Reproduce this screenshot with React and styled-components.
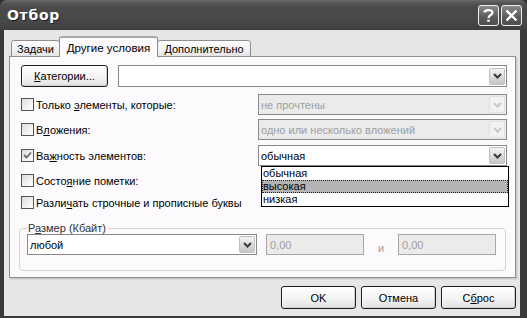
import React from "react";
import styled, { createGlobalStyle, css } from "styled-components";

const Global = createGlobalStyle`
  html, body { margin: 0; padding: 0; background: #2e2e2e; }
  body {
    font-family: "Liberation Sans", Arial, sans-serif;
    font-size: 11px;
    color: #000;
  }
  * { box-sizing: border-box; }
`;

const Window = styled.div`
  width: 527px;
  height: 318px;
  display: flex;
  flex-direction: column;
  background: #3a3a3a;
  border-radius: 7px 7px 0 0;
  overflow: hidden;
`;

const TitleBar = styled.div`
  height: 30px;
  flex: none;
  display: flex;
  align-items: center;
  padding: 0 5px 0 7px;
  background: linear-gradient(#6a6a6a 0px, #555 3px, #4a4a4a 8px, #474747 22px, #3e3e3e 30px);
`;

const Title = styled.div`
  flex: 1;
  color: #fff;
  font-family: "DejaVu Sans", sans-serif;
  font-weight: bold;
  font-size: 14px;
  letter-spacing: 0.7px;
  text-shadow: 1px 1px 0 #222;
`;

const TitleButton = styled.div`
  width: 21px;
  height: 21px;
  margin-left: 2px;
  border: 1px solid #f0f0f0;
  border-radius: 3px;
  background: linear-gradient(#8a8a8a, #5a5a5a 60%, #4e4e4e);
  display: flex;
  align-items: center;
  justify-content: center;
`;

const Frame = styled.div`
  flex: 1;
  display: flex;
  flex-direction: column;
  margin: 0 7px 2px 4px;
  background: #e6e6e6;
  padding: 7px 4px 0 5px;
`;

const TabStrip = styled.div`
  height: 20px;
  display: flex;
  align-items: flex-end;
  padding-left: 2px;
  position: relative;
  z-index: 1;
  margin-bottom: -1px;
`;

const Tab = styled.div`
  height: ${(p) => (p.$active ? "21px" : "17px")};
  width: ${(p) => p.$w}px;
  margin: 0 ${(p) => (p.$active ? "-1px" : "0")};
  display: flex;
  align-items: center;
  justify-content: center;
  border: 1px solid #8f8f8f;
  border-bottom: ${(p) => (p.$active ? "none" : "1px solid #8f8f8f")};
  border-radius: 3px 3px 0 0;
  background: ${(p) => (p.$active ? "#fcfafc" : "linear-gradient(#fefefe, #f0eff0 70%, #e4e4e4)")};
  z-index: ${(p) => (p.$active ? 2 : 1)};
  border-top: ${(p) => (p.$active ? "2px solid #a8a8a8" : "1px solid #8f8f8f")};
  font-size: ${(p) => (p.$active ? "11.5px" : "11px")};
  padding-top: ${(p) => (p.$active ? "0" : "1px")};
  white-space: nowrap;
`;

const Panel = styled.div`
  height: 222px;
  border: 1px solid #8f8f8f;
  background: #fcfafc;
  box-shadow: 1px 1px 0 #c8c8c8, 2px 2px 0 #d8d8d8;
  padding: 8px 8px 0 11px;
  display: flex;
  flex-direction: column;
  position: relative;
`;

const TopRow = styled.div`
  display: flex;
  align-items: center;
  gap: 10px;
  height: 22px;
`;

const PushButton = styled.div`
  width: ${(p) => p.$w || 75}px;
  height: ${(p) => p.$h || 23}px;
  border: 1px solid #1e1e1e;
  border-radius: 3px;
  background: linear-gradient(#ffffff, #f2f2f2 60%, #e0e0e0);
  box-shadow: inset -1px -1px 0 #cfcfcf, inset 1px 1px 0 #fff;
  display: flex;
  align-items: center;
  justify-content: center;
  font-size: 11px;
`;

const Combo = styled.div`
  width: ${(p) => (p.$w ? `${p.$w}px` : "auto")};
  flex: ${(p) => (p.$w ? "none" : "1")};
  height: ${(p) => p.$h || 21}px;
  border: 1px solid #8a8a8a;
  background: ${(p) => (p.$disabled ? "#ebebeb" : "#fff")};
  color: ${(p) => (p.$disabled ? "#9e9e9e" : "#000")};
  display: flex;
  align-items: center;
  padding: 0 1px 0 2px;
  font-size: 11px;
  position: relative;
`;

const ComboText = styled.span`
  flex: 1;
  white-space: nowrap;
`;

const ArrowBox = styled.div`
  width: 16px;
  height: ${(p) => p.$h || 17}px;
  border-radius: 2px;
  border: 1px solid ${(p) => (p.$disabled ? "#e0e0e0" : "#c0c0c0")};
  background: ${(p) =>
    p.$disabled ? "#f2f2f2" : "linear-gradient(#f4f4f4, #d8d8d8 60%, #c6c6c6)"};
  display: flex;
  align-items: center;
  justify-content: center;
`;

const Arrow = ({ disabled, h }) => (
  <ArrowBox $disabled={disabled} $h={h}>
    <svg width="9" height="6" viewBox="0 0 9 6">
      <path d="M1 1 L4.5 4.5 L8 1" fill="none" stroke={disabled ? "#c8c8c8" : "#3a3a3a"} strokeWidth="2" />
    </svg>
  </ArrowBox>
);

const OptionsGrid = styled.div`
  display: grid;
  grid-template-columns: 237px 249px;
  grid-auto-rows: auto;
  margin-top: 7px;
  row-gap: 4px;
`;

const CheckRow = styled.label`
  display: flex;
  align-items: center;
  gap: 2px;
  height: ${(p) => p.$h || 21}px;
  margin-top: ${(p) => p.$mt || 0}px;
  font-size: 11px;
  white-space: nowrap;
  grid-column: ${(p) => (p.$full ? "1 / span 2" : "auto")};
`;

const Box = styled.span`
  width: 13px;
  height: 13px;
  border: 1px solid #555;
  background: linear-gradient(135deg, #dcdcdc, #f6f6f6 70%, #fff);
  display: inline-flex;
  align-items: center;
  justify-content: center;
  flex: none;
`;

const Check = ({ checked }) => (
  <Box>
    {checked && (
      <svg width="9" height="9" viewBox="0 0 9 9">
        <path d="M1 4 L3.5 6.5 L8 1.5" fill="none" stroke="#6a6a6a" strokeWidth="1.8" />
      </svg>
    )}
  </Box>
);

const ComboCell = styled.div`
  display: flex;
  margin-top: ${(p) => p.$mt || 0}px;
  position: relative;
`;

const DropList = styled.div`
  position: absolute;
  left: 3px;
  right: -2px;
  top: 21px;
  border: 1px solid #000;
  background: #fff;
  z-index: 5;
  display: flex;
  flex-direction: column;
  font-size: 11px;
`;

const DropItem = styled.div`
  height: 13px;
  line-height: 13px;
  padding-left: 1px;
  ${(p) =>
    p.$selected &&
    css`
      background: #b4b4b4;
      outline: 1px dotted #222;
      outline-offset: -1px;
    `}
`;

const GroupBox = styled.fieldset`
  margin: 11px 0 0 -2px;
  width: 487px;
  min-width: 0;
  height: 49px;
  border: 1px solid #d2d2d2;
  border-radius: 4px;
  padding: 0 0 2px 7px;
  display: flex;
  align-items: center;
`;

const Legend = styled.legend`
  padding: 0 2px 0 1px;
  margin-left: 0;
  font-size: 11px;
  color: #333;
`;

const Field = styled.div`
  width: 98px;
  height: 21px;
  border: 1px solid #a8a8a8;
  background: #ebebeb;
  color: #9e9e9e;
  padding: 0 3px;
  display: flex;
  align-items: center;
  font-size: 11px;
`;

const AndLabel = styled.span`
  width: 34px;
  text-align: center;
  color: #9e9e9e;
  font-size: 11px;
  padding-top: 6px;
`;

const ComboGap = styled.div`
  width: 9px;
  flex: none;
`;

const ButtonRow = styled.div`
  display: flex;
  justify-content: flex-end;
  gap: 5px;
  margin-top: 8px;
`;

export default function App() {
  return (
    <>
      <Global />
      <Window>
        <TitleBar>
          <Title>Отбор</Title>
          <TitleButton>
            <svg width="13" height="15" viewBox="0 0 13 15">
              <path d="M2.5 4.5 C2.5 1.5 10.5 1 10.5 4.5 C10.5 7 6.5 7 6.5 10" fill="none" stroke="#fff" strokeWidth="2.2" />
              <rect x="5.3" y="11.5" width="2.4" height="2.4" fill="#fff" />
            </svg>
          </TitleButton>
          <TitleButton>
            <svg width="13" height="13" viewBox="0 0 13 13">
              <path d="M1.5 1.5 L11.5 11.5 M11.5 1.5 L1.5 11.5" stroke="#fff" strokeWidth="2.4" />
            </svg>
          </TitleButton>
        </TitleBar>
        <Frame>
          <TabStrip>
            <Tab $w={49}>Задачи</Tab>
            <Tab $active $w={99}>Другие условия</Tab>
            <Tab $w={94}>Дополнительно</Tab>
          </TabStrip>
          <Panel>
            <TopRow>
              <PushButton $w={87} $h={22}>
                <span>
                  <u>К</u>атегории...
                </span>
              </PushButton>
              <Combo $h={22}>
                <ComboText />
                <Arrow />
              </Combo>
            </TopRow>
            <OptionsGrid>
              <CheckRow>
                <Check />
                <span>
                  Только <u>э</u>лементы, которые:
                </span>
              </CheckRow>
              <ComboCell>
                <Combo $disabled>
                  <ComboText>не прочтены</ComboText>
                  <Arrow disabled />
                </Combo>
              </ComboCell>
              <CheckRow>
                <Check />
                <span>
                  В<u>л</u>ожения:
                </span>
              </CheckRow>
              <ComboCell>
                <Combo $disabled>
                  <ComboText>одно или несколько вложений</ComboText>
                  <Arrow disabled />
                </Combo>
              </ComboCell>
              <CheckRow $mt={1}>
                <Check checked />
                <span>
                  Ва<u>ж</u>ность элементов:
                </span>
              </CheckRow>
              <ComboCell $mt={1}>
                <Combo>
                  <ComboText>обычная</ComboText>
                  <Arrow />
                </Combo>
                <DropList>
                  <DropItem>обычная</DropItem>
                  <DropItem $selected>высокая</DropItem>
                  <DropItem>низкая</DropItem>
                </DropList>
              </ComboCell>
              <CheckRow $full>
                <Check />
                <span>
                  Состо<u>я</u>ние пометки:
                </span>
              </CheckRow>
              <CheckRow $full $h={17} $mt={-1}>
                <Check />
                <span>
                  Разли<u>ч</u>ать строчные и прописные буквы
                </span>
              </CheckRow>
            </OptionsGrid>
            <GroupBox>
              <Legend>
                Р<u>а</u>змер (Кбайт)
              </Legend>
              <Combo $w={230}>
                <ComboText>любой</ComboText>
                <Arrow />
              </Combo>
              <ComboGap />
              <Field>0,00</Field>
              <AndLabel>и</AndLabel>
              <Field>0,00</Field>
            </GroupBox>
          </Panel>
          <ButtonRow>
            <PushButton>OK</PushButton>
            <PushButton>Отмена</PushButton>
            <PushButton>
              <span>
                С<u>б</u>рос
              </span>
            </PushButton>
          </ButtonRow>
        </Frame>
      </Window>
    </>
  );
}
